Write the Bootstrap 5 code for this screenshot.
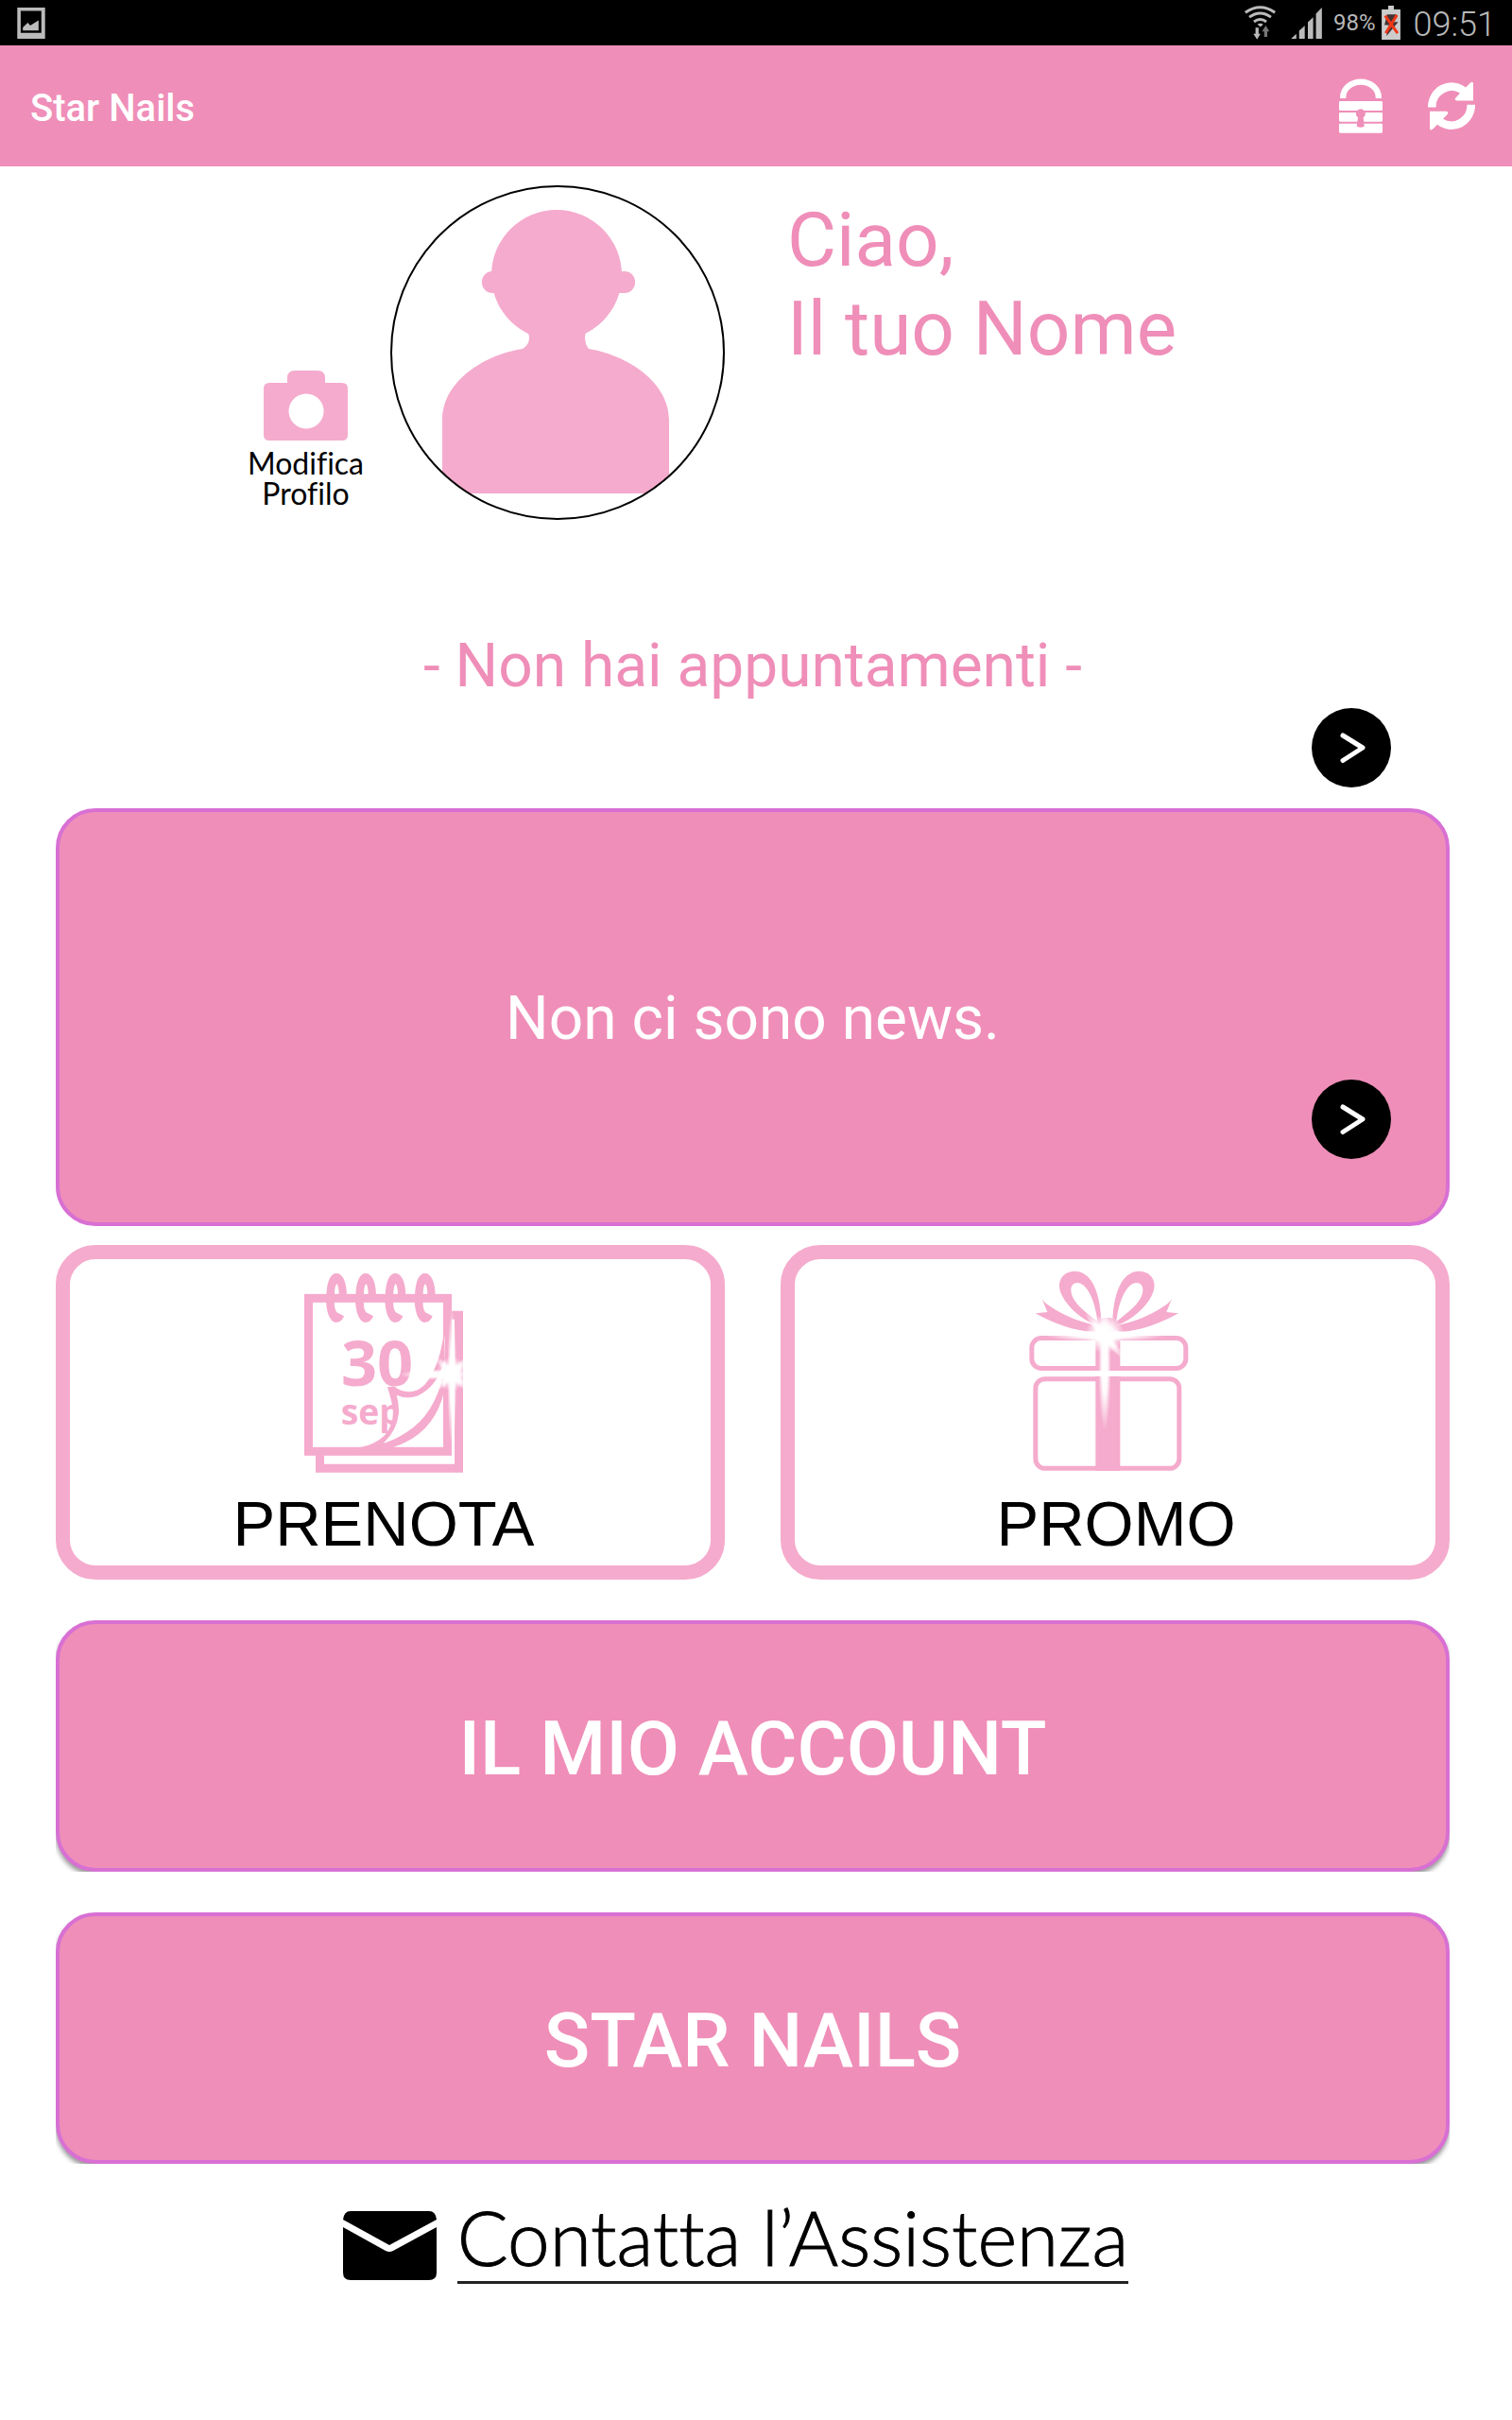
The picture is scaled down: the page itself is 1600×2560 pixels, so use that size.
<!DOCTYPE html>
<html lang="it">
<head>
<meta charset="utf-8">
<meta name="viewport" content="width=device-width, initial-scale=1">
<title>Star Nails</title>
<link href="https://cdn.jsdelivr.net/npm/bootstrap@5.3.0/dist/css/bootstrap.min.css" rel="stylesheet">
<style>
:root { --pink: #ef8eb8; --pale: #f5abcd; --edge: #d870d4; }
body { font-family: Roboto, "Liberation Sans", sans-serif; background: #fff; color: #000; }
svg { display: block; flex: none; }
.status-bar { height: 48px; background: #000; color: #b8b8b8; font-weight: 300; padding: 0 17px 0 18px; }
.status-pct { font-size: 24px; line-height: 32px; font-weight: 400; margin: 0 6px 0 12px; }
.status-time { font-size: 36px; line-height: 48px; margin-left: 14px; padding-top: 4px; }
.app-bar { height: 128px; background: var(--pink); padding: 0 39px 0 32px; }
.app-title { font-size: 40px; line-height: 48px; font-weight: 500; color: #fff; padding-top: 5px; }
.app-tools { gap: 48px; }
.plain { border: 0; padding: 0; background: none; color: inherit; }
.page-body { padding: 20px 66px 96px 59px; }
.pair { display: grid; grid-template-columns: 1fr 1fr; column-gap: 59px; }
.edit-btn { font-family: Lato, sans-serif; font-variant-ligatures: none; font-size: 32px; line-height: 32px; gap: 8px; margin: 0 28px 12px 0; }
.hello { font-size: 80px; line-height: 94px; color: var(--pink); padding: 11px 0 0 7px; }
.appointments { font-size: 64px; line-height: 76px; color: var(--pink); margin: 117px 0 6px; }
.arrow-row { padding-right: 62px; margin-bottom: 22px; }
.panel { background: var(--pink); border: 4px solid var(--edge); border-radius: 42px; color: #fff; }
.news { min-height: 442px; font-size: 64px; line-height: 76px; padding-top: 4px; }
.news-arrow { right: 58px; bottom: 67px; }
.tiles { margin-top: 20px; }
.tile { min-height: 354px; border: 15px solid var(--pale); border-radius: 42px; padding: 10px 14px 0 0; font-family: "Liberation Sans", sans-serif; font-size: 67px; line-height: 76px; gap: 15px; color: #000; }
.big-btn { min-height: 266px; margin-top: 43px; padding: 6px 0 0; font-size: 80px; line-height: 94px; font-weight: 500; box-shadow: 0 4px 5px #999; clip-path: inset(0); }
.contact { margin-top: 30px; gap: 22px; padding-right: 36px; color: #000; font-family: Lato, sans-serif; font-variant-ligatures: none; font-weight: 300; font-size: 80px; line-height: 94px; -webkit-text-stroke: 1px #000; }
.contact span { border-bottom: 3px solid #222; }
</style>
</head>
<body>
<div class="status-bar d-flex align-items-center">
  <svg width="30" height="33" viewBox="54 22 90 101" class="me-auto" role="img" aria-label="Immagine"><path fill="#bbb" fill-rule="evenodd" d="M54 22h90v101H54zM65 33v71h67V33z"/><path fill="#bbb" d="M72 96V86l16-15 8 9 27-17v33z"/></svg>
  <svg width="33" height="36" viewBox="112 16 100 110" role="img" aria-label="Wi-Fi"><g fill="none" stroke="#bbb" stroke-width="9"><path d="M114 38q48-34 96 0M127 53q35-25 70 0M142 68q20-15 40 0"/></g><path fill="#bbb" d="M153 76q9-6 19 0l-9 9zM147 87h10v20h6l-11 18-12-18h7z"/><path fill="#777" d="M180 80l12 19h-7v18h-10V99h-7z"/></svg>
  <svg class="ms-3" width="33" height="33" viewBox="255 20 99 100" role="img" aria-label="Segnale"><path fill="#bbb" d="M255 120l17-16v16zM281 120V94l18-16v42zM309 120V67l17-16v69zM335 120V40l19-20v100z"/></svg>
  <span class="status-pct">98%</span>
  <svg width="20" height="36" viewBox="543 14 60 109" role="img" aria-label="Batteria"><path fill="#ccc" d="M564 14h18v12h21v97h-60V26h21z"/><path fill="#433" d="M560 42h32l-14 24h18l-38 46 8-36h-14z"/><path fill="none" stroke="#f03818" stroke-width="9" d="M554 46l40 56M592 44l-36 58"/></svg>
  <span class="status-time">09:51</span>
</div>
<header class="app-bar d-flex align-items-center justify-content-between">
  <h1 class="app-title m-0">Star Nails</h1>
  <div class="app-tools d-flex align-items-center">
    <button type="button" class="plain" aria-label="Blocca">
      <svg width="46" height="58" viewBox="411 249 138 174"><path fill="none" stroke="#fff" stroke-width="19" d="M423.500 312V309a56.500 49 0 0 1 113 0v3"/><g fill="#fff"><rect x="411" y="321" width="138" height="30" rx="4"/><rect x="411" y="357" width="138" height="29" rx="4"/><rect x="411" y="392" width="138" height="30" rx="4"/></g><path fill="#ef8eb8" d="M471 373a15 15 0 1 1 17 0l3 28q-11 6-24 0z"/></svg>
    </button>
    <button type="button" class="plain" aria-label="Aggiorna">
      <svg width="50" height="52" viewBox="693 257 150 155"><path id="arc" fill="#fff" d="M693 339A75 78 0 0 1 813 276L828 261Q837 256 837 264V318H784Q775 314 782 308L795 294A50 50 0 0 0 719 339Z"/><use href="#arc" transform="rotate(180 768 335)"/></svg>
    </button>
  </div>
</header>
<main class="page-body">
  <section class="pair">
    <div class="d-flex justify-content-end align-items-end">
      <button type="button" class="plain edit-btn d-flex flex-column align-items-center">
        <svg width="89" height="74" viewBox="0 0 89 74"><path fill="#f5abcd" fill-rule="evenodd" d="M6 13H25V8Q25 0 33 0H57Q65 0 65 8V13H83Q89 13 89 19V68Q89 74 83 74H6Q0 74 0 68V19Q0 13 6 13ZM45 24.500a18.500 18.500 0 1 0 .1 0Z"/></svg>
        <span>Modifica<br>Profilo</span>
      </button>
      <svg width="354" height="354" viewBox="0 0 354 354" role="img" aria-label="Foto profilo"><clipPath id="round"><circle cx="177" cy="177" r="176"/></clipPath><g clip-path="url(#round)" fill="#f5abcd"><circle cx="176" cy="95" r="69"/><rect x="97" y="91" width="162" height="23" rx="11"/><path d="M141 150Q147 155 147 161Q147 169 140 173C96 180 55 209 55 248V326H295V248C295 209 252 180 210 173Q206 168 206 161Q206 155 210 151Z"/></g><circle cx="177" cy="177" r="176" fill="none" stroke="#000" stroke-width="2"/></svg>
    </div>
    <div class="hello">Ciao,<br>Il tuo Nome</div>
  </section>
  <p class="appointments text-center">- Non hai appuntamenti -</p>
  <div class="arrow-row d-flex justify-content-end">
    <button type="button" class="plain" aria-label="Vai agli appuntamenti"><svg width="84" height="84" viewBox="0 0 84 84"><circle cx="42" cy="42" r="42"/><path d="M33 29L54 42L33 55.500" fill="none" stroke="#fff" stroke-width="5" stroke-linecap="round" stroke-linejoin="round"/></svg></button>
  </div>
  <section class="panel news position-relative d-flex align-items-center justify-content-center">
    <span>Non ci sono news.</span>
    <button type="button" class="plain news-arrow position-absolute" aria-label="Vai alle news"><svg width="84" height="84" viewBox="0 0 84 84"><circle cx="42" cy="42" r="42"/><path d="M33 29L54 42L33 55.500" fill="none" stroke="#fff" stroke-width="5" stroke-linecap="round" stroke-linejoin="round"/></svg></button>
  </section>
  <nav class="pair tiles" aria-label="Servizi">
    <a href="#prenota" class="tile d-flex flex-column align-items-center text-decoration-none">
      <svg width="173" height="217" viewBox="270 96 519 651" aria-hidden="true">
        <defs><radialGradient id="glow"><stop offset="0" stop-color="#fff"/><stop offset=".45" stop-color="#fff" stop-opacity=".95"/><stop offset="1" stop-color="#fff" stop-opacity="0"/></radialGradient></defs>
        <path fill="none" stroke="#f5abcd" stroke-width="27" d="M325.500 676V730H766.500V244H744"/>
        <rect x="289.500" y="190" width="441" height="486" fill="#fff" stroke="#f5abcd" stroke-width="27"/>
        <g fill="#f5abcd" font-family="Open Sans, sans-serif" font-weight="700"><text x="393" y="469" font-size="200">30</text><text x="392" y="592" font-size="112">sep</text></g>
        <path fill="#fff" d="M553 478Q582 500 622 491Q690 460 722 310V470Q680 610 540 662H480Q590 630 553 478Z"/>
        <path fill="#f5abcd" d="M720 290Q712 370 683 428Q650 492 600 486Q580 484 562 470L540 472Q552 510 557 540Q562 590 530 626Q490 662 440 664V676H740V664H556Q690 620 720 485L718 430Q690 560 600 616Q560 642 527 650Q570 610 576 555Q577 525 569 497Q600 512 635 500Q700 470 722 384Z"/>
        <path id="ring" fill="#f5abcd" fill-rule="evenodd" d="M346 180C348 134 360 111 378 111C396 111 410 134 411 180L411 190H372C370 215 374 235 384 237L402 247C396 262 386 267 376 267C357 265 345 234 345 190ZM372 178H386C386 162 384 150 379 144C374 150 372 162 372 178Z"/>
        <use href="#ring" x="93"/><use href="#ring" x="187"/><use href="#ring" x="281"/>
        <g fill="url(#glow)"><ellipse cx="745" cy="430" rx="48" ry="54"/><ellipse cx="745" cy="440" rx="15" ry="220"/><ellipse cx="690" cy="432" rx="110" ry="17"/><ellipse cx="745" cy="430" rx="76" ry="16" transform="rotate(45 745 430)"/><ellipse cx="745" cy="430" rx="76" ry="16" transform="rotate(-45 745 430)"/></g>
      </svg>
      <span>PRENOTA</span>
    </a>
    <a href="#promo" class="tile d-flex flex-column align-items-center text-decoration-none">
      <svg width="173" height="217" viewBox="200 96 519 651" aria-hidden="true">
        <g fill="none" stroke="#f5abcd" stroke-width="15"><rect x="214.500" y="316.500" width="489" height="96" rx="30"/><rect x="226.500" y="446" width="456" height="284" rx="30"/></g>
        <path fill="#f5abcd" d="M417 310H495V420H417zM417 438H495V738H417z"/>
        <g fill="#f5abcd" fill-rule="evenodd"><path id="bow" d="M435 258C430 160 400 104 350 104C310 106 290 140 310 180C330 222 375 258 420 276C350 262 300 236 260 207Q250 200 246 190L264 234L226 238C280 268 350 296 415 297Q440 285 435 258ZM423 264C380 230 340 200 339 164C338 142 360 132 380 150C405 174 418 220 423 264Z"/><use href="#bow" transform="translate(906 0) scale(-1 1)"/><path d="M430 256Q455 245 480 258V300H420z"/></g>
        <g fill="url(#glow)"><circle cx="446" cy="303" r="62"/><ellipse cx="446" cy="400" rx="20" ry="210"/><ellipse cx="446" cy="309" rx="190" ry="18"/><ellipse cx="446" cy="309" rx="96" ry="16" transform="rotate(50 446 309)"/></g>
      </svg>
      <span class="ps-3">PROMO</span>
    </a>
  </nav>
  <button type="button" class="panel big-btn d-block w-100">IL MIO ACCOUNT</button>
  <button type="button" class="panel big-btn d-block w-100">STAR NAILS</button>
  <div class="d-flex justify-content-center">
    <a href="#assistenza" class="contact d-flex align-items-end text-decoration-none">
      <svg class="mb-1" width="99" height="73" viewBox="0 0 99 73" aria-hidden="true"><path d="M8 0H91Q98 0 99 9L49 36L0 9Q1 0 8 0ZM0 17L45 42Q49 44 53 42L99 17V65Q99 73 91 73H8Q0 73 0 65Z"/></svg>
      <span>Contatta l’Assistenza</span>
    </a>
  </div>
</main>
<script src="https://cdn.jsdelivr.net/npm/bootstrap@5.3.0/dist/js/bootstrap.bundle.min.js"></script>
</body>
</html>
